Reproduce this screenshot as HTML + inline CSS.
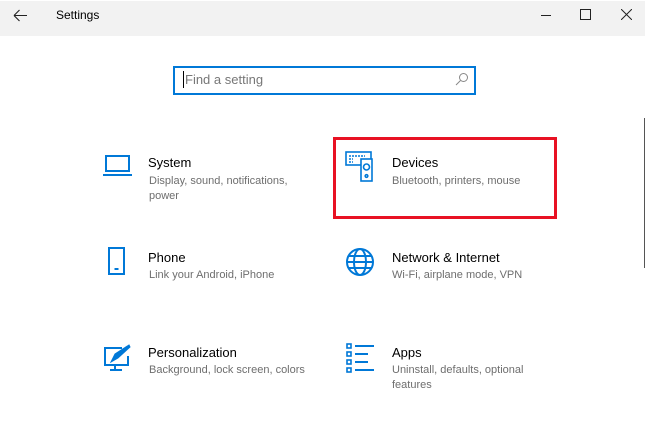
<!DOCTYPE html>
<html><head><style>
body{margin:0;width:648px;height:427px;background:#fff;font-family:"Liberation Sans",sans-serif;position:relative;overflow:hidden}
.tb{position:absolute;left:0;top:1px;width:645px;height:35px;background:#f2f2f2}
.t{position:absolute;font-size:13px;color:#000;top:0}
.s{position:absolute;font-size:11px;color:#6e6e6e;line-height:15px}
svg{position:absolute}
</style></head><body>
<div class="tb"></div>
<svg style="left:12px;top:8px" width="16" height="16"><path d="M2 7.5H15M2 7.5L7.5 2M2 7.5L7.5 13" stroke="#222" stroke-width="1.1" fill="none"/></svg>
<div style="position:absolute;left:56px;top:8px;font-size:12px;color:#000">Settings</div>
<div style="position:absolute;left:541px;top:15px;width:10px;height:1px;background:#222"></div>
<div style="position:absolute;left:580px;top:9px;width:9px;height:9px;border:1px solid #222"></div>
<svg style="left:621px;top:9px" width="11" height="11"><path d="M0 0L11 11M11 0L0 11" stroke="#222" stroke-width="1"/></svg>
<div style="position:absolute;left:173px;top:66px;width:299px;height:25px;border:2px solid #0078d7"></div>
<div style="position:absolute;left:183px;top:71px;width:1px;height:17px;background:#000"></div>
<div style="position:absolute;left:185px;top:72px;font-size:13px;color:#777">Find a setting</div>
<svg style="left:455px;top:72px" width="14" height="14"><circle cx="8.5" cy="5.5" r="4" stroke="#888" fill="none"/><path d="M5.5 8.5L1 13" stroke="#888"/></svg>
<div style="position:absolute;left:644px;top:118px;width:1px;height:150px;background:#555"></div>
<div style="position:absolute;left:333px;top:137px;width:218px;height:76px;border:3px solid #e81123"></div>
<svg style="left:102px;top:152px" width="32" height="30"><rect x="4" y="4" width="23" height="15" stroke="#0078d7" stroke-width="2" fill="none"/><path d="M1 23H30" stroke="#0078d7" stroke-width="2"/></svg>
<div class="t" style="left:148px;top:155px">System</div>
<div class="s" style="left:149px;top:174px">Display, sound, notifications,<br>power</div>
<svg style="left:345px;top:151px" width="32" height="32" fill="none" stroke="#0078d7" stroke-width="1.6"><rect x="1" y="1" width="25" height="13"/><path d="M4 5h16M4 8h4M4 11h4" stroke-dasharray="2 1"/><rect x="16" y="8" width="11" height="22" fill="#fff"/><circle cx="21.5" cy="16" r="3"/><circle cx="21.5" cy="25" r="1.3"/></svg>
<div class="t" style="left:392px;top:155px">Devices</div>
<div class="s" style="left:392px;top:174px">Bluetooth, printers, mouse</div>
<svg style="left:106px;top:246px" width="22" height="32" fill="none" stroke="#0078d7" stroke-width="2"><rect x="3" y="2" width="15" height="26"/><path d="M8.5 23h4"/></svg>
<div class="t" style="left:148px;top:250px">Phone</div>
<div class="s" style="left:149px;top:268px">Link your Android, iPhone</div>
<svg style="left:345px;top:247px" width="30" height="30" fill="none" stroke="#0078d7" stroke-width="2"><circle cx="15" cy="15" r="13"/><ellipse cx="15" cy="15" rx="6" ry="13"/><path d="M2 15h26M4 9h22M4 21h22"/></svg>
<div class="t" style="left:392px;top:250px">Network &amp; Internet</div>
<div class="s" style="left:392px;top:268px">Wi-Fi, airplane mode, VPN</div>
<svg style="left:103px;top:343px" width="30" height="32" fill="none" stroke="#0078d7" stroke-width="2"><path d="M19 5H2V22H25V13"/><path d="M12 22v5M7 27h12"/><path d="M8 19l4-8 14-9 1 2-12 11z" fill="#0078d7" stroke-width="1"/></svg>
<div class="t" style="left:148px;top:345px">Personalization</div>
<div class="s" style="left:149px;top:363px">Background, lock screen, colors</div>
<svg style="left:345px;top:342px" width="32" height="32" fill="none" stroke="#0078d7" stroke-width="1.6"><rect x="2" y="2" width="4" height="4"/><rect x="2" y="10" width="4" height="4"/><rect x="2" y="18" width="4" height="4"/><rect x="2" y="26" width="4" height="4"/><path d="M10 4h19M10 12h13M10 20h13M10 28h19" stroke-width="2"/></svg>
<div class="t" style="left:392px;top:345px">Apps</div>
<div class="s" style="left:392px;top:363px">Uninstall, defaults, optional<br>features</div>
</body></html>
